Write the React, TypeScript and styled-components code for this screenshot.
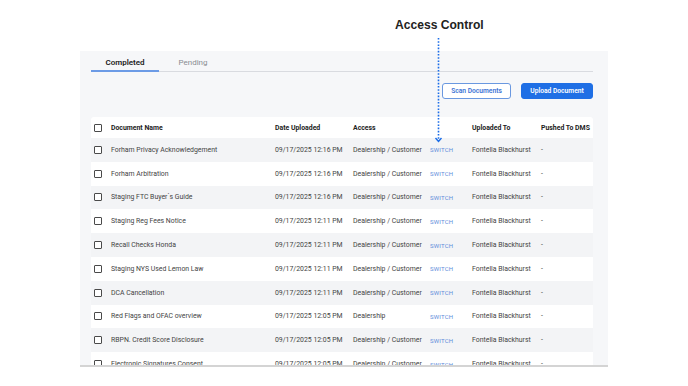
import React from "react";
import styled, { createGlobalStyle } from "styled-components";

const Global = createGlobalStyle`
  html, body { margin: 0; padding: 0; background: #ffffff; }
  body { font-family: Roboto, "Noto Sans", Arial, sans-serif; }
  * { box-sizing: border-box; }
`;

const Page = styled.div`
  position: relative;
  width: 688px;
  height: 386px;
  padding: 51px 0 0 80px;
  overflow: hidden;
`;

const Annotation = styled.div`
  position: absolute;
  left: 395px;
  top: 18px;
  font-family: "Liberation Sans", Arial, sans-serif;
  font-weight: 700;
  font-size: 12.1px;
  color: #222;
`;

const Pointer = styled.svg`
  position: absolute;
  left: 433px;
  top: 38px;
`;

const Panel = styled.div`
  width: 528px;
  height: 316px;
  background: #f6f7f9;
  border-bottom: 2px solid #d4d4d4;
  padding: 0 15px 0 11px;
  overflow: hidden;
`;

const Tabs = styled.div`
  display: flex;
  border-bottom: 1px solid #d9dbe0;
  margin-top: 4px;
`;

const Tab = styled.div<{ $active?: boolean }>`
  width: 68px;
  height: 17px;
  text-align: center;
  font-size: 8px;
  line-height: 15px;
  font-weight: ${(p) => (p.$active ? 600 : 400)};
  color: ${(p) => (p.$active ? "#222" : "#8a8d92")};
  border-bottom: 2px solid ${(p) => (p.$active ? "#6c9be6" : "transparent")};
  margin-bottom: -1px;
`;

const Actions = styled.div`
  display: flex;
  justify-content: flex-end;
  gap: 10px;
  margin-top: 11px;
`;

const Button = styled.button<{ $primary?: boolean }>`
  height: 16px;
  padding: 0;
  width: ${(p) => (p.$primary ? 72 : 69)}px;
  border-radius: 3px;
  font-family: Roboto, Arial, sans-serif;
  font-size: 6.7px;
  font-weight: 600;
  border: 1px solid ${(p) => (p.$primary ? "#1f6fe5" : "#6a98e0")};
  background: ${(p) => (p.$primary ? "#1f6fe5" : "#ffffff")};
  color: ${(p) => (p.$primary ? "#ffffff" : "#3b72d4")};
`;

const Table = styled.div`
  margin-top: 18px;
  width: 502px;
`;

const cols = "20px 164px 78px 77px 42px 69px 52px";

const HeadRow = styled.div`
  display: grid;
  grid-template-columns: ${cols};
  align-items: center;
  height: 21px;
  background: #ffffff;
  border-radius: 3px 3px 0 0;
  font-size: 6.9px;
  font-weight: 700;
  color: #222;
`;

const Row = styled.div<{ $shade: boolean }>`
  display: grid;
  grid-template-columns: ${cols};
  align-items: center;
  height: 23.8px;
  background: ${(p) => (p.$shade ? "#f3f4f6" : "#ffffff")};
  font-size: 6.9px;
  color: #444;
`;

const Check = styled.span`
  display: block;
  width: 8px;
  height: 8px;
  margin-left: 3px;
  border: 1px solid #4a4a4a;
  border-radius: 1px;
  background: #fff;
`;

const Cell = styled.span`
  white-space: nowrap;
`;

const SwitchLink = styled.span`
  font-size: 6px;
  color: #5d8ddb;
  letter-spacing: 0.2px;
`;

const rows = [
  ["Forham Privacy Acknowledgement", "09/17/2025 12:16 PM", "Dealership / Customer"],
  ["Forham Arbitration", "09/17/2025 12:16 PM", "Dealership / Customer"],
  ["Staging FTC Buyer`s Guide", "09/17/2025 12:16 PM", "Dealership / Customer"],
  ["Staging Reg Fees Notice", "09/17/2025 12:11 PM", "Dealership / Customer"],
  ["Recall Checks Honda", "09/17/2025 12:11 PM", "Dealership / Customer"],
  ["Staging NYS Used Lemon Law", "09/17/2025 12:11 PM", "Dealership / Customer"],
  ["DCA Cancellation", "09/17/2025 12:11 PM", "Dealership / Customer"],
  ["Red Flags and OFAC overview", "09/17/2025 12:05 PM", "Dealership"],
  ["RBPN. Credit Score Disclosure", "09/17/2025 12:05 PM", "Dealership / Customer"],
  ["Electronic Signatures Consent", "09/17/2025 12:05 PM", "Dealership / Customer"],
];

export default function App() {
  return (
    <>
      <Global />
      <Page>
        <Panel>
          <Tabs>
            <Tab $active>Completed</Tab>
            <Tab>Pending</Tab>
          </Tabs>
          <Actions>
            <Button>Scan Documents</Button>
            <Button $primary>Upload Document</Button>
          </Actions>
          <Table>
            <HeadRow>
              <Check />
              <Cell>Document Name</Cell>
              <Cell>Date Uploaded</Cell>
              <Cell>Access</Cell>
              <Cell />
              <Cell>Uploaded To</Cell>
              <Cell>Pushed To DMS</Cell>
            </HeadRow>
            {rows.map((r, i) => (
              <Row key={i} $shade={i % 2 === 0}>
                <Check />
                <Cell>{r[0]}</Cell>
                <Cell>{r[1]}</Cell>
                <Cell>{r[2]}</Cell>
                <SwitchLink>SWITCH</SwitchLink>
                <Cell>Fontella Blackhurst</Cell>
                <Cell>-</Cell>
              </Row>
            ))}
          </Table>
        </Panel>
        <Annotation>Access Control</Annotation>
        <Pointer width="12" height="106" viewBox="0 0 12 106">
          <line x1="5.5" y1="0" x2="5.5" y2="103" stroke="#1a6ce8" strokeWidth="1.6" strokeDasharray="1.6 1.6" />
          <polyline points="2.5,100 5.5,103.5 8.5,100" fill="none" stroke="#1a6ce8" strokeWidth="1.4" />
        </Pointer>
      </Page>
    </>
  );
}
